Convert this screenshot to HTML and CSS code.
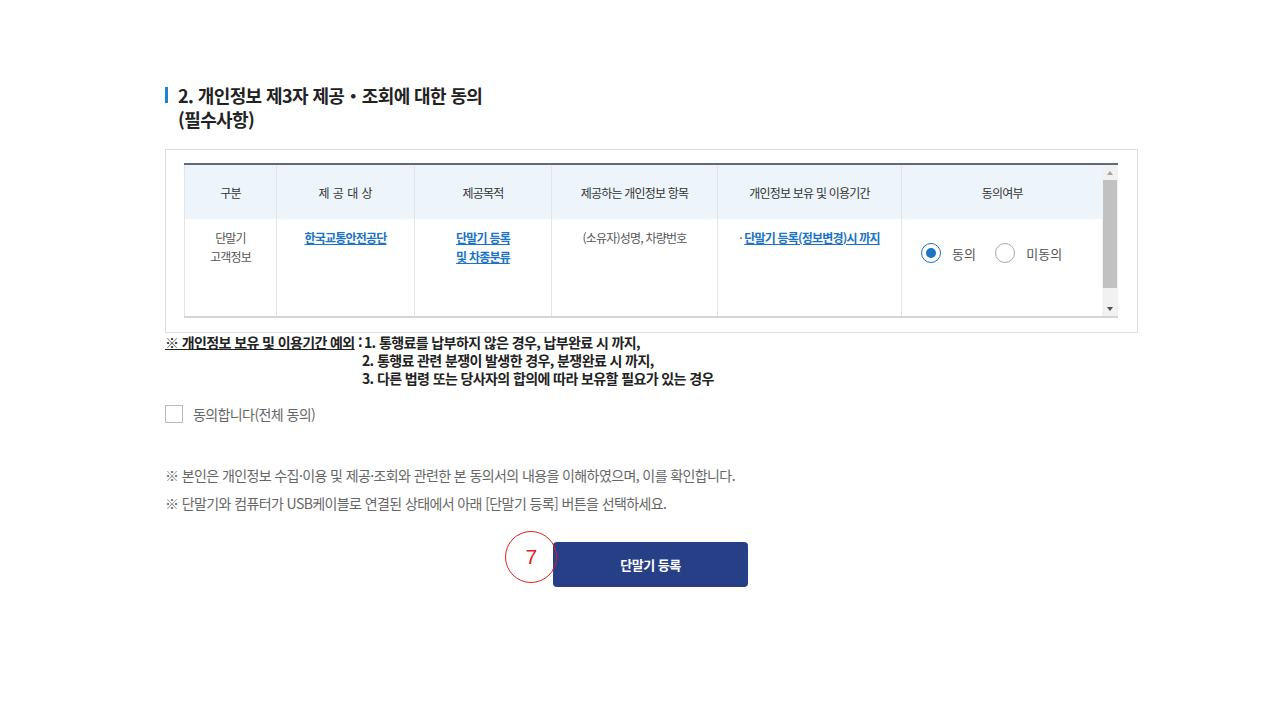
FILE: index.html
```html
<!DOCTYPE html>
<html lang="ko">
<head>
	<meta charset="UTF-8">
	<title>개인정보 제3자 제공 동의</title>
	<link rel="stylesheet" href="styles.css">
</head>
<body>
<div class="page">
	<h2 class="sec-title">2. 개인정보 제3자 제공・조회에 대한 동의<br>(필수사항)</h2>

	<div class="agree-box">
		<div class="grid-wrap">
			<div class="grid-view">
				<table class="agree-table">
					<colgroup>
						<col style="width:92px">
						<col style="width:138px">
						<col style="width:137px">
						<col style="width:166px">
						<col style="width:184px">
						<col style="width:201px">
					</colgroup>
					<thead>
						<tr>
							<th>구분</th>
							<th class="wide">제 공 대 상</th>
							<th>제공목적</th>
							<th>제공하는 개인정보 항목</th>
							<th>개인정보 보유 및 이용기간</th>
							<th>동의여부</th>
						</tr>
					</thead>
					<tbody>
						<tr>
							<td>단말기<br>고객정보</td>
							<td><a href="#" class="link">한국교통안전공단</a></td>
							<td><a href="#" class="link">단말기 등록<br>및 차종분류</a></td>
							<td>(소유자)성명, 차량번호</td>
							<td>· <a href="#" class="link">단말기 등록(정보변경)시 까지</a></td>
							<td class="radio-cell">
								<label class="radio"><span class="radio-dot on"></span>동의</label>
								<label class="radio"><span class="radio-dot"></span>미동의</label>
							</td>
						</tr>
					</tbody>
				</table>
			</div>
			<div class="scrollbar">
				<span class="arrow up"></span>
				<div class="track"><div class="thumb"></div></div>
				<span class="arrow down"></span>
			</div>
		</div>
	</div>

	<div class="except">
		<div class="except-label"><u>※ 개인정보 보유 및 이용기간 예외</u> :</div>
		<div class="except-list">
			<p>1. 통행료를 납부하지 않은 경우, 납부완료 시 까지,</p>
			<p>2. 통행료 관련 분쟁이 발생한 경우, 분쟁완료 시 까지,</p>
			<p>3. 다른 법령 또는 당사자의 합의에 따라 보유할 필요가 있는 경우</p>
		</div>
	</div>

	<label class="check-all"><span class="check-box"></span>동의합니다(전체 동의)</label>

	<div class="notice">
		<p>※ 본인은 개인정보 수집·이용 및 제공·조회와 관련한 본 동의서의 내용을 이해하였으며, 이를 확인합니다.</p>
		<p>※ 단말기와 컴퓨터가 USB케이블로 연결된 상태에서 아래 [단말기 등록] 버튼을 선택하세요.</p>
	</div>

	<div class="btn-area">
		<button class="btn-regist">단말기 등록
			<span class="step-mark">7</span>
		</button>
	</div>
</div>
</body>
</html>
```

FILE: styles.css
```css
html {
	font-family: "Noto Sans CJK KR", "Noto Sans", sans-serif;
	background: #fff;
	color: #222;
}
body {
	margin: 0;
}
.page {
	width: 973px;
	margin-left: 165px;
	padding-top: 83px;
}

.sec-title {
	position: relative;
	margin: 0;
	padding-left: 13px;
	font-size: 18px;
	line-height: 24px;
	font-weight: bold;
	letter-spacing: -0.6px;
	color: #222;
}
.sec-title:before {
	content: "";
	position: absolute;
	left: 0;
	top: 4px;
	width: 3px;
	height: 16px;
	background: #1a86d0;
}

.agree-box {
	margin-top: 18px;
	border: 1px solid #ddd;
	padding: 13px 19px 14px 18px;
}
.grid-wrap {
	display: flex;
	border-top: 2px solid #5f6b78;
	border-bottom: 2px solid #d4d4d4;
	height: 151px;
	overflow: hidden;
}
.grid-view {
	width: 918px;
}
.agree-table {
	width: 918px;
	border-collapse: collapse;
	table-layout: fixed;
	font-size: 12px;
	letter-spacing: -0.8px;
}
.agree-table th {
	height: 54px;
	background: #edf5fb;
	color: #333;
	font-weight: normal;
	border-left: 1px solid #e4e4e4;
	text-align: center;
	padding: 0;
}
.agree-table th.wide {
	letter-spacing: 0;
}
.agree-table td {
	height: 97px;
	vertical-align: top;
	text-align: center;
	padding: 9px 4px 0;
	line-height: 19px;
	color: #555;
	border-left: 1px solid #e4e4e4;
}
.link {
	color: #1a73c4;
	font-weight: bold;
	text-decoration: underline;
}

.radio-cell.radio-cell {
	text-align: left;
	padding: 24px 0 0 19px;
	letter-spacing: 0;
}
.radio {
	display: inline-flex;
	align-items: center;
	gap: 11px;
	font-size: 13px;
	color: #555;
	margin-right: 16px;
}
.radio-dot {
	box-sizing: border-box;
	width: 20px;
	height: 20px;
	border: 1px solid #aaa;
	border-radius: 50%;
	background: #fff;
	position: relative;
}
.radio-dot.on {
	border-color: #1a73c4;
}
.radio-dot.on:after {
	content: "";
	position: absolute;
	left: 4px;
	top: 4px;
	width: 10px;
	height: 10px;
	border-radius: 50%;
	background: #1a73c4;
}

.scrollbar {
	width: 16px;
	display: flex;
	flex-direction: column;
	background: #f1f1f1;
}
.scrollbar .track {
	flex: 1;
}
.scrollbar .thumb {
	margin: 0 1px;
	height: 108px;
	background: #c1c1c1;
}
.arrow {
	height: 15px;
	display: flex;
	align-items: center;
	justify-content: center;
}
.arrow:before {
	content: "";
	border-left: 3px solid transparent;
	border-right: 3px solid transparent;
}
.arrow.up:before {
	border-bottom: 4px solid #a3a3a3;
}
.arrow.down:before {
	border-top: 4px solid #505050;
}

.except {
	display: flex;
	font-size: 14px;
	font-weight: bold;
	line-height: 18px;
	letter-spacing: -0.6px;
	color: #222;
}
.except-label {
	white-space: nowrap;
	padding-right: 2px;
}
.except-list p {
	margin: 0;
}
.except-list p + p {
	margin-left: -2px;
}

.check-all {
	display: flex;
	align-items: center;
	gap: 10px;
	margin-top: 17px;
	font-size: 14px;
	color: #666;
	letter-spacing: -0.6px;
}
.check-box {
	box-sizing: border-box;
	width: 18px;
	height: 18px;
	border: 1px solid #bbb;
	background: #fff;
}

.notice {
	margin-top: 37px;
	font-size: 14px;
	line-height: 28px;
	color: #666;
	letter-spacing: -0.6px;
}
.notice p {
	margin: 0;
}

.btn-area {
	margin-top: 25px;
	display: flex;
	justify-content: center;
}
.btn-regist {
	position: relative;
	width: 195px;
	height: 45px;
	border: 0;
	border-radius: 4px;
	background: #263f87;
	color: #fff;
	font-family: inherit;
	font-size: 13px;
	font-weight: bold;
	letter-spacing: -0.5px;
	margin-left: -2px;
}
.step-mark {
	position: absolute;
	left: -48px;
	top: -11px;
	box-sizing: border-box;
	width: 52px;
	height: 52px;
	border: 1px solid #e02020;
	border-radius: 50%;
	color: #e02020;
	font-size: 21px;
	font-weight: normal;
	display: flex;
	align-items: center;
	justify-content: center;
	font-family: "Liberation Sans", sans-serif;
}
```
